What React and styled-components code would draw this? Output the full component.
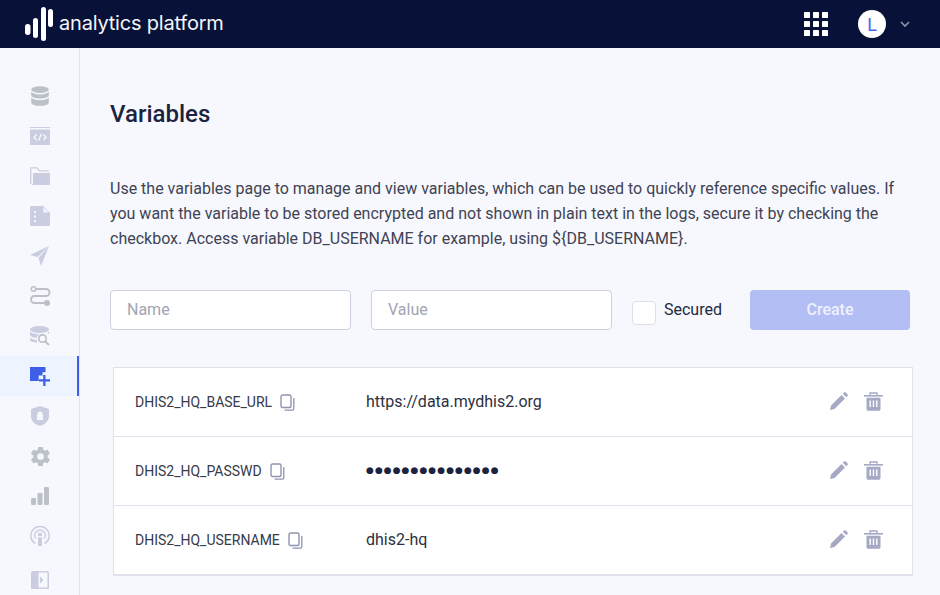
import React from "react";
import styled, { createGlobalStyle } from "styled-components";

const GlobalStyle = createGlobalStyle`
  html, body {
    margin: 0;
    padding: 0;
    height: 100%;
    overflow: hidden;
    background: #f6f8fd;
    font-family: "Roboto", "Liberation Sans", sans-serif;
  }
  * { box-sizing: border-box; }
`;

const Page = styled.div`
  width: 940px;
  height: 595px;
  display: flex;
  flex-direction: column;
  overflow: hidden;
`;

const TopBar = styled.header`
  height: 48px;
  flex: none;
  background: #081238;
  display: flex;
  align-items: center;
  padding: 0 30px 0 25px;
`;

const Brand = styled.div`
  display: flex;
  align-items: center;
  gap: 6px;
  flex: 1;
`;

const BrandName = styled.span`
  color: #f4f6fb;
  font-family: "Inter", "Noto Sans", sans-serif;
  font-size: 20px;
  letter-spacing: -0.2px;
  line-height: 48px;
  position: relative;
  top: -1px;
`;

const Avatar = styled.div`
  width: 28px;
  height: 28px;
  border-radius: 50%;
  background: #fff;
  color: #4a67ee;
  font-size: 18px;
  display: flex;
  align-items: center;
  justify-content: center;
  margin: 0 14px 0 30px;
`;

const Body = styled.div`
  flex: 1;
  display: flex;
  min-height: 0;
`;

const Sidebar = styled.nav`
  width: 80px;
  flex: none;
  border-right: 1px solid #dfe2ee;
  padding-top: 28px;
  display: flex;
  flex-direction: column;
`;

const NavItem = styled.div`
  height: 40px;
  flex: none;
  display: flex;
  align-items: center;
  justify-content: center;
  padding-left: ${(p) => (p.$active ? "3px" : "1px")};
  background: ${(p) => (p.$active ? "#eef4ff" : "transparent")};
  border-right: ${(p) => (p.$active ? "2px solid #3f5fe8" : "0")};
  margin-top: ${(p) => (p.$last ? "4px" : "0")};
`;

const Main = styled.main`
  flex: 1;
  min-width: 0;
  padding: 48px 30px 0;
`;

const Title = styled.h1`
  margin: 0;
  font-size: 24px;
  line-height: 36px;
  font-weight: 500;
  color: #1c2340;
`;

const Intro = styled.p`
  margin: 44px 0 0;
  font-size: 16px;
  line-height: 25px;
  color: #3f4354;
  width: 800px;
`;

const Form = styled.form`
  display: flex;
  align-items: center;
  margin-top: 39px;
  height: 40px;
`;

const Input = styled.input`
  width: 241px;
  flex: none;
  height: 40px;
  margin-right: 20px;
  padding: 0 16px 2px;
  border: 1px solid #cdd0de;
  border-radius: 4px;
  background: #fff;
  font: 16px "Roboto", sans-serif;
  outline: none;
  &::placeholder { color: #a2a5b3; opacity: 1; }
`;

const Check = styled.label`
  display: flex;
  flex: none;
  align-items: center;
  gap: 8px;
  font-size: 16px;
  color: #232940;
  margin-right: 28px;
  span { position: relative; top: -1px; }
  i {
    display: block;
    width: 24px;
    height: 24px;
    border: 1px solid #dcdfea;
    border-radius: 4px;
    background: #fff;
    position: relative;
    top: 3px;
  }
`;

const CreateButton = styled.button`
  width: 160px;
  flex: none;
  height: 40px;
  border: 0;
  padding: 0 0 2px;
  border-radius: 4px;
  background: #b3bef4;
  color: #eef1fe;
  font: 500 16px "Roboto", sans-serif;
`;

const Table = styled.section`
  width: 800px;
  margin: 37px 0 0 3px;
  background: #fff;
  border: 1px solid #dfe1ec;
  border-bottom-width: 2px;
`;

const Row = styled.div`
  height: 68px;
  display: flex;
  align-items: center;
  padding: 0 29px 0 21px;
  & + & {
    height: 69px;
    border-top: 1px solid #dfe1ec;
  }
`;

const NameCell = styled.div`
  width: 231px;
  flex: none;
  display: flex;
  align-items: center;
  gap: 8px;
  font-size: 14px;
  color: #363a4a;
`;

const ValueCell = styled.div`
  flex: 1;
  font-size: 16px;
  color: #2c3040;
  margin-bottom: 2px;
`;

const SecretValue = styled(ValueCell)`
  font-family: "DejaVu Sans", sans-serif;
  font-size: 9px;
  letter-spacing: 1.05px;
  color: #1c2340;
`;

const Actions = styled.div`
  display: flex;
  align-items: center;
  gap: 16px;
  margin-bottom: 2px;
`;

const grey = "#bcc1c9";
const lilac = "#c9cddf";
const pageBg = "#f6f8fd";

const LogoMark = () => (
  <svg width="28" height="36" viewBox="0 0 28 36" fill="#fff">
    <rect x="0" y="18" width="5.500" height="11" rx="2.700" />
    <rect x="8" y="12" width="5" height="20" rx="2.500" />
    <rect x="16" y="1" width="5" height="34" rx="2.500" />
    <rect x="23" y="3" width="5" height="18" rx="2.500" />
  </svg>
);

const AppsIcon = () => (
  <svg width="24" height="24" viewBox="0 0 24 24" fill="#fff">
    {[0, 9, 18].map((y) =>
      [0, 9, 18].map((x) => <rect key={`${x}-${y}`} x={x} y={y} width="6" height="6" rx="0.600" />)
    )}
  </svg>
);

const Chevron = () => (
  <svg width="10" height="7" viewBox="0 0 10 7" fill="none" stroke="#8d93a8" strokeWidth="1.600">
    <path d="M1 1l4 4 4-4" />
  </svg>
);

const Db = () => (
  <svg width="18" height="20" viewBox="0 0 18 20" fill={grey}>
    <ellipse cx="9" cy="3.600" rx="8.800" ry="3.400" />
    <path d="M.2 5.800v3.400c0 1.900 3.900 3.200 8.800 3.200s8.800-1.300 8.800-3.200V5.800C16.200 7.700 13 8.400 9 8.400S1.800 7.700.2 5.800z" />
    <path d="M.2 11.400v5c0 1.900 3.900 3.400 8.800 3.400s8.800-1.500 8.800-3.400v-5c-1.600 1.900-4.800 2.700-8.800 2.700s-7.200-.8-8.800-2.700z" />
  </svg>
);

const Code = () => (
  <svg width="20" height="18" viewBox="0 0 20 18">
    <rect width="20" height="1" fill={lilac} />
    <rect y="2.500" width="20" height="15.500" fill={lilac} />
    <path d="M6.500 7.500L4 10.200l2.500 2.700M13.500 7.500l2.500 2.700-2.500 2.700M11.400 6.800l-2.800 6.800" fill="none" stroke={pageBg} strokeWidth="1.400" />
  </svg>
);

const Folder = () => (
  <svg width="20" height="18" viewBox="0 0 20 18">
    <path d="M.7 17V.8H7l2.400 3H19" fill="none" stroke={lilac} strokeWidth="1.300" />
    <path d="M3 6h17v11a1 1 0 0 1-1 1H.7c1.500 0 2.300-.8 2.300-2z" fill={lilac} />
  </svg>
);

const Doc = () => (
  <svg width="20" height="20" viewBox="0 0 20 20">
    <path d="M1.500 0H13l7 7v11.500c0 .9-.6 1.500-1.500 1.500h-17C.6 20 0 19.400 0 18.500V1.500C0 .6.600 0 1.500 0z" fill={lilac} />
    <path d="M13.500 1.500l5 5h-5z" fill={pageBg} />
    <rect x="4" y="5" width="2" height="2" fill={pageBg} />
    <rect x="4" y="9.500" width="2" height="2" fill={pageBg} />
    <rect x="4" y="14" width="2" height="2" fill={pageBg} />
  </svg>
);

const Send = () => (
  <svg width="20" height="20" viewBox="0 0 20 20" fill={lilac}>
    <path d="M19 0L0 9l7.500 2L19 0zM19 0L8.500 12l2.500 8L19 0z" />
  </svg>
);

const Route = () => (
  <svg width="21" height="20" viewBox="0 0 21 20" fill="none" stroke={grey} strokeWidth="2">
    <circle cx="3.500" cy="3" r="2.200" strokeWidth="1.500" />
    <path d="M6 3h10a3.500 3.500 0 0 1 0 7H4.500a3.500 3.500 0 0 0 0 7H14" />
    <circle cx="17" cy="17" r="3" fill={grey} stroke="none" />
  </svg>
);

const DbSearch = () => (
  <svg width="20" height="20" viewBox="0 0 20 20" fill={lilac}>
    <ellipse cx="9.500" cy="3.500" rx="9.500" ry="3.500" />
    <path d="M0 5.500C1.500 7.500 5 8.200 9 8.200c1 0 2-.1 2.800-.2A6 6 0 0 0 6.500 12C3.500 11.700 1 10.800 0 9.500zM0 12c1.500 1 3.800 1.800 6.800 2l.7 2.500C4 16.400 0 15.500 0 14.500z" />
    <path d="M19 5.500V8l-2-.8z" />
    <circle cx="12.500" cy="12.500" r="3.700" fill="none" stroke={grey} strokeWidth="1.700" />
    <path d="M15.200 15.200l3.800 3.800" stroke={grey} strokeWidth="2" />
  </svg>
);

const VarsActive = () => (
  <svg width="20" height="19" viewBox="0 0 20 19" fill="#3f5fe8">
    <path d="M0 0h15.500v4.500a1 1 0 0 1-.3.7h-2.700v3.300H8.700v5.500H0z" />
    <path d="M13.200 8h2.300v4.300H20v2.300h-4.500V19h-2.300v-4.400H9v-2.300h4.200z" />
  </svg>
);

const Shield = () => (
  <svg width="18" height="20" viewBox="0 0 18 20" fill={lilac}>
    <path fillRule="evenodd" d="M9 0l9 3v7c0 5-4 8.500-9 10-5-1.500-9-5-9-10V3zM9 5.500A2.500 2.500 0 0 0 6.500 8v1H6v5h6V9h-.5V8A2.500 2.500 0 0 0 9 5.500z" />
  </svg>
);

const Gear = () => (
  <svg width="23" height="23" viewBox="0 0 24 24" fill={grey}>
    <path d="M19.430 12.980c.04-.32.07-.64.07-.98s-.03-.66-.07-.98l2.110-1.650a.5.500 0 0 0 .12-.64l-2-3.460a.5.500 0 0 0-.61-.22l-2.490 1a7.300 7.300 0 0 0-1.690-.98l-.38-2.650A.49.490 0 0 0 14 2h-4a.49.490 0 0 0-.490.420l-.380 2.650c-.610.250-1.170.590-1.690.980l-2.490-1a.49.490 0 0 0-.610.220l-2 3.460a.49.490 0 0 0 .120.640l2.110 1.650c-.040.320-.070.650-.070.980s.030.660.070.980l-2.110 1.650a.5.500 0 0 0-.120.640l2 3.460c.120.220.390.300.610.220l2.490-1c.520.400 1.080.730 1.690.980l.38 2.650c.030.240.240.420.490.420h4c.250 0 .460-.180.490-.420l.380-2.650c.610-.250 1.170-.590 1.690-.980l2.490 1c.230.090.490 0 .610-.220l2-3.460a.5.500 0 0 0-.120-.640zM12 15.500a3.500 3.500 0 1 1 0-7 3.500 3.500 0 0 1 0 7z" />
  </svg>
);

const Bars = () => (
  <svg width="18" height="18" viewBox="0 0 18 18" fill={grey}>
    <rect x="0" y="11" width="5" height="7" rx="1.200" />
    <rect x="6.500" y="6" width="5" height="12" rx="1.200" />
    <rect x="13" y="0" width="5" height="18" rx="1.200" />
  </svg>
);

const Podcast = () => (
  <svg width="20" height="20" viewBox="0 0 20 20" fill="none" stroke={lilac} strokeWidth="1.500">
    <path d="M5.500 17.600a9.200 9.200 0 1 1 9 0" />
    <path d="M6 12.800a5.300 5.300 0 1 1 8 0" />
    <circle cx="10" cy="8.500" r="2" fill={lilac} stroke="none" />
    <path d="M8 11.500h4V20H8z" fill={lilac} stroke="none" />
  </svg>
);

const Collapse = () => (
  <svg width="18" height="18" viewBox="0 0 18 18">
    <rect width="18" height="18" rx="1.500" fill={lilac} />
    <rect x="7.500" y="1.500" width="9" height="15" fill={pageBg} />
    <path d="M9 5.500L12.500 9 9 12.500z" fill={lilac} />
  </svg>
);

const CopyIcon = () => (
  <svg width="15" height="17" viewBox="0 0 15 17" fill="none" stroke="#8f94b0">
    <rect x="1" y="1" width="10" height="12.500" rx="1.500" strokeWidth="1.400" />
    <path d="M13.800 4v10.500c0 1-.6 1.700-1.600 1.700H4.500" strokeWidth="1.300" />
  </svg>
);

const PencilIcon = () => (
  <svg width="18" height="18" viewBox="0 0 18 18" fill="#a5a9c4">
    <path d="M0 18l1-4.500L11.500 3l3.500 3.500L4.500 17zM12.800 1.700L14 .5c.5-.5 1.200-.5 1.700 0l1.800 1.800c.5.5.5 1.200 0 1.700l-1.200 1.200z" />
  </svg>
);

const TrashIcon = () => (
  <svg width="19" height="19" viewBox="0 0 19 19">
    <path d="M6 3V1h7v2" fill="none" stroke="#a5a9c4" strokeWidth="1.300" />
    <rect x="0" y="3" width="19" height="1.600" fill="#a5a9c4" />
    <path d="M2.500 5.800h14V17c0 1.100-.8 1.800-1.800 1.800H4.300c-1 0-1.800-.7-1.800-1.800z" fill="#a5a9c4" />
    <path d="M6.200 8.500v6.500M9.500 8.500v6.500M12.800 8.500v6.500" stroke="#fff" strokeWidth="1.400" />
  </svg>
);

const navIcons = [Db, Code, Folder, Doc, Send, Route, DbSearch, VarsActive, Shield, Gear, Bars, Podcast];

const variables = [
  { name: "DHIS2_HQ_BASE_URL", value: "https://data.mydhis2.org" },
  { name: "DHIS2_HQ_PASSWD", value: "●●●●●●●●●●●●●●●", secret: true },
  { name: "DHIS2_HQ_USERNAME", value: "dhis2-hq" },
];

export default function App() {
  return (
    <Page>
      <GlobalStyle />
      <TopBar>
        <Brand>
          <LogoMark />
          <BrandName>analytics platform</BrandName>
        </Brand>
        <AppsIcon />
        <Avatar>L</Avatar>
        <Chevron />
      </TopBar>
      <Body>
        <Sidebar>
          {navIcons.map((Icon, i) => (
            <NavItem key={i} $active={Icon === VarsActive}>
              <Icon />
            </NavItem>
          ))}
          <NavItem $last>
            <Collapse />
          </NavItem>
        </Sidebar>
        <Main>
          <Title>Variables</Title>
          <Intro>
            Use the variables page to manage and view variables, which can be used to quickly
            reference specific values. If you want the variable to be stored encrypted and not
            shown in plain text in the logs, secure it by checking the checkbox. Access variable
            DB_USERNAME for example, using {"${DB_USERNAME}"}.
          </Intro>
          <Form>
            <Input placeholder="Name" />
            <Input placeholder="Value" />
            <Check>
              <i />
              <span>Secured</span>
            </Check>
            <CreateButton type="button">Create</CreateButton>
          </Form>
          <Table>
            {variables.map((v) => (
              <Row key={v.name}>
                <NameCell>
                  {v.name}
                  <CopyIcon />
                </NameCell>
                {v.secret ? <SecretValue>{v.value}</SecretValue> : <ValueCell>{v.value}</ValueCell>}
                <Actions>
                  <PencilIcon />
                  <TrashIcon />
                </Actions>
              </Row>
            ))}
          </Table>
        </Main>
      </Body>
    </Page>
  );
}
